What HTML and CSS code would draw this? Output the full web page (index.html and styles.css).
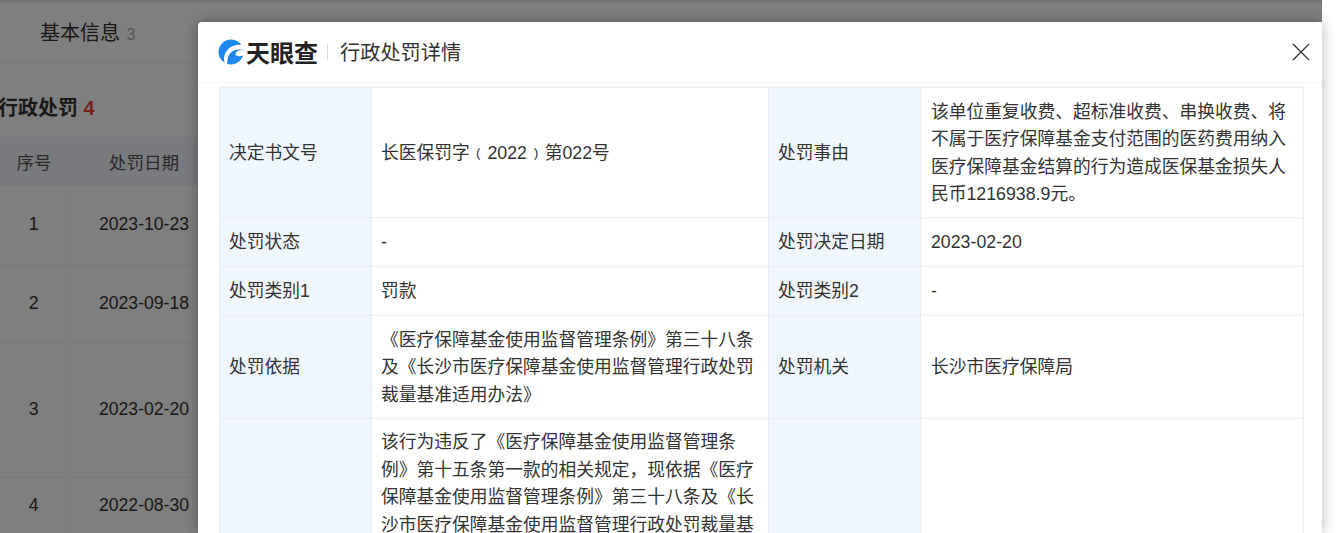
FILE: index.html
```html
<!DOCTYPE html>
<html lang="zh-CN">
<head>
    <meta charset="UTF-8">
    <title>行政处罚详情</title>
    <link rel="stylesheet" href="styles.css">
</head>
<body>
    <div class="page">
        <div class="tabs">
            <div class="tab">基本信息 <span class="tab-num">3</span></div>
        </div>
        <h2 class="section-title">行政处罚 <span class="section-num">4</span></h2>
        <table class="list">
            <colgroup><col class="col-no"><col class="col-date"></colgroup>
            <tr class="list-head"><th>序号</th><th>处罚日期</th></tr>
            <tr class="row-1"><td>1</td><td>2023-10-23</td></tr>
            <tr class="row-2"><td>2</td><td>2023-09-18</td></tr>
            <tr class="row-3"><td>3</td><td>2023-02-20</td></tr>
            <tr class="row-4"><td>4</td><td>2022-08-30</td></tr>
        </table>
        <div class="mask"></div>
    </div>

    <div class="modal">
        <div class="modal-head">
            <svg class="logo-mark" width="26" height="26" viewBox="0 0 26 26">
                <circle cx="13" cy="13" r="12.500" fill="#1e88f0"/>
                <path fill="#fff" d="M26 6.500C18 4 9 8 6.500 16 5.500 19.500 6 23 7.500 25.500L9.500 26C8.800 22 9.500 18 11.500 15 14 11.500 19 9.500 26 11z"/>
                <path fill="#fff" d="M26 11C21 10.500 17.500 12.500 17.500 15 17.500 17 20 18 26 16.500z"/>
            </svg>
            <span class="logo-text">天眼查</span>
            <span class="head-sep"></span>
            <span class="modal-title">行政处罚详情</span>
            <svg class="close" width="18" height="18" viewBox="0 0 18 18">
                <path d="M1 1l16 16M17 1L1 17" stroke="#333" stroke-width="1.300" fill="none"/>
            </svg>
        </div>
        <div class="modal-body">
            <table class="detail">
                <colgroup>
                    <col class="c-label"><col class="c-value-a"><col class="c-label"><col class="c-value-b">
                </colgroup>
                <tr>
                    <td class="label">决定书文号</td>
                    <td>长医保罚字﹙2022﹚第022号</td>
                    <td class="label">处罚事由</td>
                    <td>该单位重复收费、超标准收费、串换收费、将不属于医疗保障基金支付范围的医药费用纳入医疗保障基金结算的行为造成医保基金损失人民币1216938.9元。</td>
                </tr>
                <tr class="d-row-2">
                    <td class="label">处罚状态</td>
                    <td>-</td>
                    <td class="label">处罚决定日期</td>
                    <td>2023-02-20</td>
                </tr>
                <tr class="d-row-2">
                    <td class="label">处罚类别1</td>
                    <td>罚款</td>
                    <td class="label">处罚类别2</td>
                    <td>-</td>
                </tr>
                <tr>
                    <td class="label">处罚依据</td>
                    <td>《医疗保障基金使用监督管理条例》第三十八条及《长沙市医疗保障基金使用监督管理行政处罚裁量基准适用办法》</td>
                    <td class="label">处罚机关</td>
                    <td>长沙市医疗保障局</td>
                </tr>
                <tr>
                    <td class="label"></td>
                    <td class="top">该行为违反了《医疗保障基金使用监督管理条例》第十五条第一款的相关规定，现依据《医疗保障基金使用监督管理条例》第三十八条及《长沙市医疗保障基金使用监督管理行政处罚裁量基准适用办法》的规定，作出行政处罚。</td>
                    <td class="label"></td>
                    <td></td>
                </tr>
            </table>
        </div>
    </div>
</body>
</html>
```

FILE: styles.css
```css
html, body {
    margin: 0;
    padding: 0;
    height: 533px;
    overflow: hidden;
    background-color: #fff;
    font-family: "Liberation Sans", "Noto Sans CJK SC", sans-serif;
}

.page {
    width: 1322px;
    height: 533px;
    position: relative;
    overflow: hidden;
    background-color: #fff;
}

.mask {
    position: absolute;
    top: 0;
    left: 0;
    right: 0;
    bottom: 0;
    background-color: rgba(0,0,0,0.5);
}

.tabs {
    height: 60px;
    padding-left: 40px;
    border-top: 3px solid #eee;
    border-bottom: 1px solid #f3f3f3;
    display: flex;
    align-items: center;
}

.tab {
    font-size: 20px;
    color: #333;
    margin-top: -4px;
}

.tab-num {
    margin-left: 1px;
    font-size: 16px;
    color: #aaa;
}

.section-title {
    margin: 27px 0 0 -2px;
    height: 46px;
    font-size: 20px;
    line-height: 34px;
    color: #333;
    font-weight: bold;
}

.section-num {
    color: #f04134;
}

.list {
    border-collapse: collapse;
    table-layout: fixed;
    width: 220px;
    font-size: 17.6px;
    color: #333;
    text-align: center;
}

.col-no {
    width: 68px;
}

.col-date {
    width: 152px;
}

.list th {
    font-weight: normal;
    height: 49px;
    padding: 0;
    background-color: #f0f5fa;
    color: #555;
}

.list td {
    padding: 0;
    border-bottom: 1px solid #f3f3f3;
    border-right: 1px solid #f6f6f6;
}

.row-1 { height: 78px; }
.row-2 { height: 78px; }
.row-3 { height: 135px; }
.row-4 { height: 56px; }

.modal {
    position: absolute;
    top: 22px;
    left: 198px;
    width: 1124px;
    height: 511px;
    background-color: #fff;
    border-radius: 4px 0 0 0;
    box-shadow: 0 0 14px rgba(0,0,0,0.3);
    display: flex;
    flex-direction: column;
}

.modal-head {
    height: 60px;
    display: flex;
    align-items: center;
    padding-left: 20px;
    padding-right: 12px;
    border-bottom: 1px solid #f7f7f7;
    flex-shrink: 0;
}

.logo-mark {
    flex-shrink: 0;
}

.logo-text {
    margin: -2px 0 0 2px;
    font-size: 24px;
    font-weight: bold;
    color: #222;
}

.head-sep {
    width: 1px;
    height: 16px;
    margin: 0 12px 0 9px;
    background-color: #ddd;
}

.modal-title {
    margin-top: -2px;
    font-size: 20.2px;
    color: #333;
    flex: 1;
}

.modal-body {
    padding: 4px 19px 0 21px;
    overflow: hidden;
}

.detail {
    border-collapse: collapse;
    table-layout: fixed;
    width: 1084px;
    font-size: 17.75px;
    line-height: 27.5px;
    color: #333;
}

.c-label {
    width: 152px;
}

.c-value-a {
    width: 397px;
}

.c-value-b {
    width: 383px;
}

.detail td {
    border: 1px solid #ebebeb;
    padding: 10.5px 10px 8.5px 9px;
    vertical-align: middle;
}

.detail td:last-child {
    padding-left: 10px;
}

.detail td.label {
    background-color: #f0f6fd;
}

.detail td.top {
    vertical-align: top;
}

.d-row-2 td {
    height: 29px;
}
```
